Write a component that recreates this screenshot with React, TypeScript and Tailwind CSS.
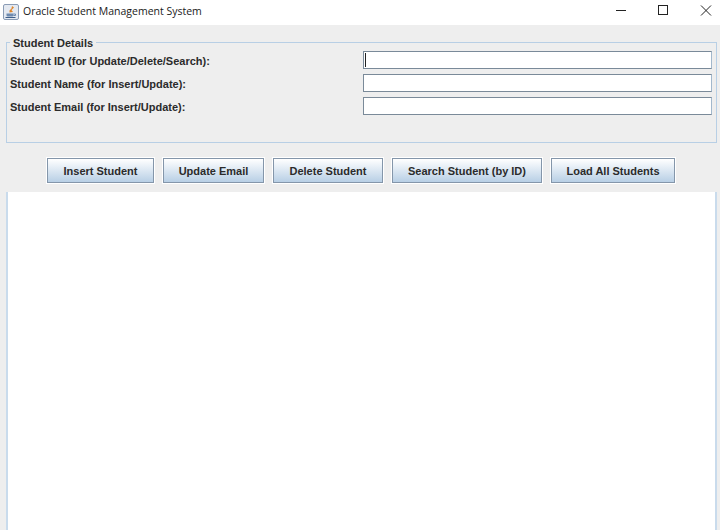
import React from 'react';

const sans = { fontFamily: '"Liberation Sans", Arial, sans-serif' };

const fields = [
  'Student ID (for Update/Delete/Search):',
  'Student Name (for Insert/Update):',
  'Student Email (for Insert/Update):',
];

const buttons = [
  { label: 'Insert Student', width: 'w-[107px]' },
  { label: 'Update Email', width: 'w-[101px]' },
  { label: 'Delete Student', width: 'w-[110px]' },
  { label: 'Search Student (by ID)', width: 'w-[150px]' },
  { label: 'Load All Students', width: 'w-[124px]' },
];

const JavaIcon = () => (
  <svg width="16" height="16" viewBox="0 0 16 16" className="shrink-0 mb-[1px]">
    <rect x="0.5" y="0.5" width="15" height="15" rx="1.5" fill="#e4e9f1" stroke="#8a9cb5" />
    <path d="M9 2 L11 3.5 L8.5 6 L10 8 L6.5 8.5 L6.5 6.5 L8.5 4.5 Z" fill="#e0862a" />
    <path d="M3.5 9.5 H10.5 V11.5 Q10.5 12.5 9 12.5 H5 Q3.5 12.5 3.5 11.5 Z" fill="#6f8bb0" />
    <path d="M10.5 10 H12.5 V11.5 H10.5" fill="none" stroke="#6f8bb0" />
    <path d="M2.5 13.5 H12.5" stroke="#3f5f8a" />
  </svg>
);

export default function App() {
  return (
    <div className="w-[720px] h-[530px] overflow-hidden flex flex-col bg-[#eeeeee]" style={sans}>
      {/* Title bar */}
      <div className="h-[25px] shrink-0 bg-white flex items-center pl-[3px]">
        <JavaIcon />
        <span className="ml-[4px] mb-[2px] text-[10.5px] text-[#1a1a1a]" style={{ fontFamily: '"Open Sans", sans-serif' }}>
          Oracle Student Management System
        </span>
        <div className="ml-auto flex items-center">
          <svg width="120" height="25" viewBox="0 0 120 25">
            <path d="M16 10.5 H26" stroke="#222" strokeWidth="1" />
            <rect x="58.5" y="5.5" width="9" height="9" fill="none" stroke="#222" strokeWidth="1" />
            <path d="M101 5.5 L111 15.5 M111 5.5 L101 15.5" stroke="#222" strokeWidth="1" />
          </svg>
        </div>
      </div>

      {/* Student details group */}
      <div className="relative mt-[17px] ml-[6px] mr-[3px] h-[101px] shrink-0 border border-[#b8cfe5] pt-[8px] pl-[3px] pr-[4px]">
        <span className="absolute left-[3px] top-[-7px] bg-[#eeeeee] px-[3px] text-[11px] leading-[14px] font-bold text-[#2b2b2b]">
          Student Details
        </span>
        <div className="flex flex-col gap-[5px]">
          {fields.map((label, i) => (
            <div key={label} className="flex items-center h-[18px]">
              <span className="w-[353px] shrink-0 pt-[2px] text-[11px] font-bold text-[#2b2b2b]">{label}</span>
              <div className="flex-1 h-[18px] bg-white border border-[#7a8a99] border-r-[#a3b8cc] flex items-center pl-[1px]">
                {i === 0 && <div className="w-[1px] h-[14px] bg-[#222222]" />}
              </div>
            </div>
          ))}
        </div>
      </div>

      {/* Buttons */}
      <div className="mt-[15px] h-[25px] shrink-0 flex pl-[47px] gap-[9px]">
        {buttons.map((b) => (
          <button
            key={b.label}
            className={`${b.width} h-[25px] pt-[1px] border border-[#8496aa] bg-gradient-to-b from-white to-[#b8cfe5] text-[11px] font-bold text-[#2b2b2b] shadow-[0_0_0_1px_#ffffff]`}
          >
            {b.label}
          </button>
        ))}
      </div>

      {/* Output area */}
      <div className="mt-[9px] ml-[6px] mr-[3px] flex-1 bg-white border-l-[2px] border-r-[2px] border-[#c9dbec]" />
    </div>
  );
}
